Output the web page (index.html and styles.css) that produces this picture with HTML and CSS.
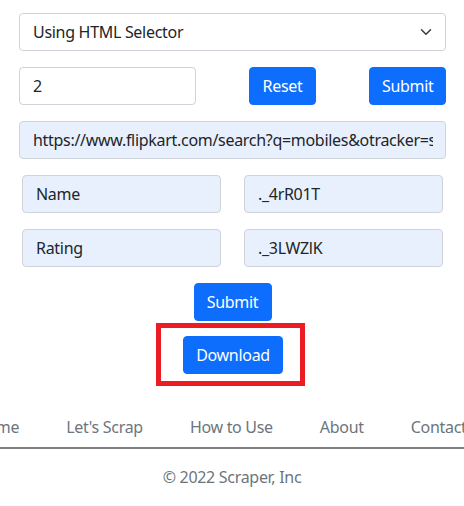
FILE: index.html
```html
<!DOCTYPE html>
<html>
<head>
<meta charset="utf-8">
<link rel="stylesheet" href="styles.css">
</head>
<body>
<main class="page">
  <div class="select">
    <span>Using HTML Selector</span>
    <svg class="chev" width="16" height="12" viewBox="0 0 16 16"><path d="m2 5 6 6 6-6" fill="none" stroke="#343a40" stroke-width="2" stroke-linecap="round" stroke-linejoin="round"/></svg>
  </div>
  <div class="row1">
    <input class="field num" type="text" value="2">
    <button class="btn reset">Reset</button>
    <button class="btn submit1">Submit</button>
  </div>
  <input class="field fill url" type="text" value="https://www.flipkart.com/search?q=mobiles&amp;otracker=search&amp;otracker1=search">
  <div class="pair">
    <input class="field fill" type="text" value="Name">
    <input class="field fill" type="text" value="._4rR01T">
  </div>
  <div class="pair">
    <input class="field fill" type="text" value="Rating">
    <input class="field fill" type="text" value="._3LWZlK">
  </div>
  <div class="center">
    <button class="btn">Submit</button>
  </div>
  <div class="center">
    <div class="mark">
      <button class="btn">Download</button>
    </div>
  </div>
</main>
<footer class="footer">
  <ul class="nav">
    <li>Home</li>
    <li>Let's Scrap</li>
    <li>How to Use</li>
    <li>About</li>
    <li>Contact Us</li>
  </ul>
  <p class="copy">© 2022 Scraper, Inc</p>
</footer>
</body>
</html>
```
FILE: styles.css
```css
* { box-sizing: border-box; }
html, body { margin: 0; padding: 0; background: #fff; }
body {
  font-family: "Noto Sans", "Open Sans", sans-serif;
  font-size: 16px;
  line-height: 24px;
  letter-spacing: -0.3px;
  color: #212529;
  overflow: hidden;
  width: 464px;
}
.page {
  padding: 13px 18px 0 19px;
  display: flex;
  flex-direction: column;
  gap: 16px;
}
.select {
  height: 38px;
  border: 1px solid #ced4da;
  border-radius: 4px;
  padding: 6px 12px 6px 13px;
  display: flex;
  align-items: center;
  justify-content: space-between;
}
.chev { margin-right: -1px; }
.field {
  display: block;
  height: 38px;
  border: 1px solid #ced4da;
  border-radius: 4px;
  padding: 6px 12px 6px 13px;
  font: inherit;
  letter-spacing: inherit;
  color: #212529;
  background: #fff;
  outline: none;
  min-width: 0;
}
.fill { background: #e8f0fe; }
.row1 {
  display: flex;
  align-items: center;
}
.num { width: 177px; }
.btn {
  height: 38px;
  border: 1px solid #0d6efd;
  background: #0d6efd;
  color: #fff;
  border-radius: 4px;
  padding: 6px 12px;
  font: inherit;
  letter-spacing: inherit;
  cursor: pointer;
}
.reset { margin-left: 53px; width: 67px; }
.submit1 { margin-left: 53px; width: 77px; }
.url { width: 100%; }
.pair {
  display: flex;
  gap: 23px;
  padding: 0 3px;
}
.pair .field { width: 199px; }
.center {
  display: flex;
  justify-content: center;
}
.center .btn { min-width: 78px; }
.center:last-child { margin-top: -14px; }
.mark {
  border: 5px solid #ed1c24;
  padding: 8px 17px 7px 22px;
  margin-right: 4px;
}
.mark .btn { width: 100px; }
.footer { margin-top: 21px; }
.nav {
  list-style: none;
  margin: 0;
  padding: 8px 0;
  display: flex;
  justify-content: center;
  flex-wrap: nowrap;
  gap: 47px;
  border-bottom: 2px solid #808080;
  white-space: nowrap;
  color: #6c757d;
}
.nav li { flex: none; }
.copy {
  margin: 16px 0 0;
  text-align: center;
  color: #6c757d;
}
```
